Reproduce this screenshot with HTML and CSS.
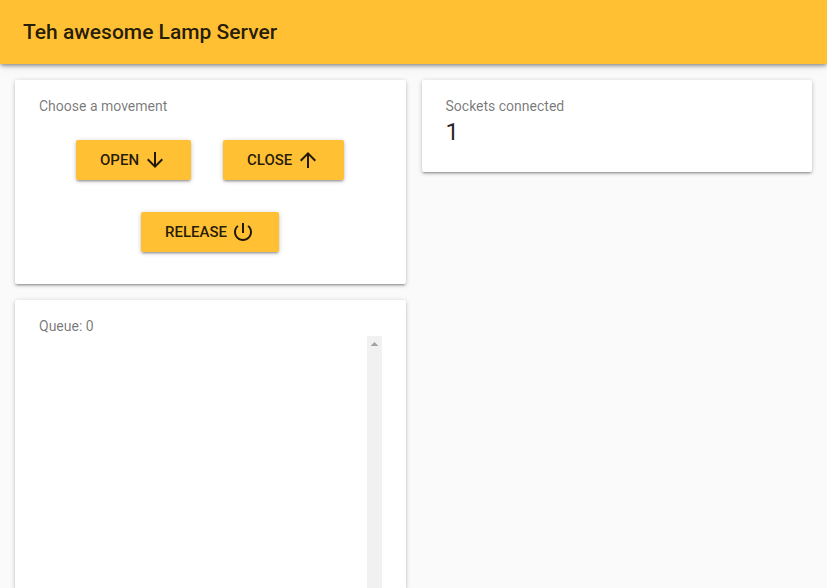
FILE: index.html
```html
<!DOCTYPE html>
<html lang="en">
<head>
<meta charset="utf-8">
<title>Teh awesome Lamp Server</title>
<link rel="stylesheet" href="styles.css">
</head>
<body>
<header class="toolbar"><h1>Teh awesome Lamp Server</h1></header>
<main class="grid">
  <section class="card movement">
    <h2 class="label">Choose a movement</h2>
    <div class="actions">
      <button class="btn open">OPEN<svg viewBox="0 0 24 24"><path d="M20 12l-1.41-1.41L13 16.17V4h-2v12.17l-5.58-5.59L4 12l8 8 8-8z"/></svg></button>
      <button class="btn close">CLOSE<svg viewBox="0 0 24 24"><path d="M4 12l1.41 1.41L11 7.83V20h2V7.83l5.58 5.59L20 12l-8-8-8 8z"/></svg></button>
      <button class="btn release">RELEASE<svg viewBox="0 0 24 24"><path d="M13 3h-2v10h2V3zm4.83 2.17l-1.42 1.42C17.99 7.86 19 9.81 19 12c0 3.87-3.13 7-7 7s-7-3.13-7-7c0-2.19 1.01-4.14 2.58-5.42L6.17 5.17C4.23 6.82 3 9.26 3 12c0 4.97 4.03 9 9 9s9-4.03 9-9c0-2.74-1.23-5.18-3.17-6.83z"/></svg></button>
    </div>
  </section>
  <section class="card sockets">
    <h2 class="label">Sockets connected</h2>
    <p class="count">1</p>
  </section>
  <section class="card queue">
    <h2 class="label">Queue: 0</h2>
    <div class="list"><div class="track"><span class="arrow"></span></div></div>
  </section>
</main>
</body>
</html>
```
FILE: styles.css
```css
* { box-sizing: border-box; }
html, body { height: 100%; overflow: hidden; }
body {
  display: flex;
  flex-direction: column;
  margin: 0;
  background: #fafafa;
  font-family: Roboto, sans-serif;
  color: rgba(0, 0, 0, 0.87);
}
.toolbar {
  position: relative;
  display: flex;
  flex: none;
  align-items: center;
  height: 64px;
  padding: 0 23px;
  background: #ffc034;
  box-shadow: 0 2px 4px -1px rgba(0,0,0,.35), 0 2px 4px 0 rgba(0,0,0,.14), 0 1px 10px 0 rgba(0,0,0,.12);
}
h1 { margin: 0; font-size: 21px; font-weight: 500; line-height: 32px; }
.grid {
  display: grid;
  flex: 1;
  min-height: 0;
  grid-template-columns: 391px 390px;
  grid-template-rows: 204px minmax(0, 1fr);
  gap: 16px;
  padding: 16px 15px 0;
}
.card {
  padding: 16px 24px;
  background: #fff;
  border-radius: 2px;
  box-shadow: 0 1px 5px 0 rgba(0,0,0,.2), 0 2px 2px 0 rgba(0,0,0,.14), 0 3px 1px -2px rgba(0,0,0,.12);
}
.label { margin: 0; font-size: 14px; font-weight: 400; line-height: 20px; color: rgba(0, 0, 0, 0.54); }
.actions { display: flex; flex-wrap: wrap; justify-content: center; gap: 32px; padding: 24px 2px 0 0; }
.btn {
  display: flex;
  align-items: center;
  height: 40px;
  padding: 0 23px 0 24.5px;
  border: 0;
  border-radius: 2px;
  background: #ffc034;
  color: rgba(0, 0, 0, 0.87);
  font: 500 15px/40px Roboto, sans-serif;
  box-shadow: 0 1px 5px 0 rgba(0,0,0,.2), 0 2px 2px 0 rgba(0,0,0,.14), 0 3px 1px -2px rgba(0,0,0,.12);
}
.btn svg { flex: none; width: 24px; height: 24px; margin-left: 3.5px; fill: currentColor; }
.open { width: 115px; }
.close { width: 121px; }
.release { width: 138px; }
.sockets { height: 92px; padding-left: 23.5px; }
.count { margin: 0; font-size: 24px; line-height: 32px; }
.queue { padding-bottom: 0; border-radius: 2px 2px 0 0; }
.list { display: flex; justify-content: flex-end; height: calc(100% - 20px); }
.track { display: flex; justify-content: center; width: 15px; background: #f1f1f1; }
.arrow {
  width: 8px;
  height: 4px;
  margin-top: 6px;
  background: #a3a3a3;
  clip-path: polygon(50% 0, 100% 100%, 0 100%);
}
```
